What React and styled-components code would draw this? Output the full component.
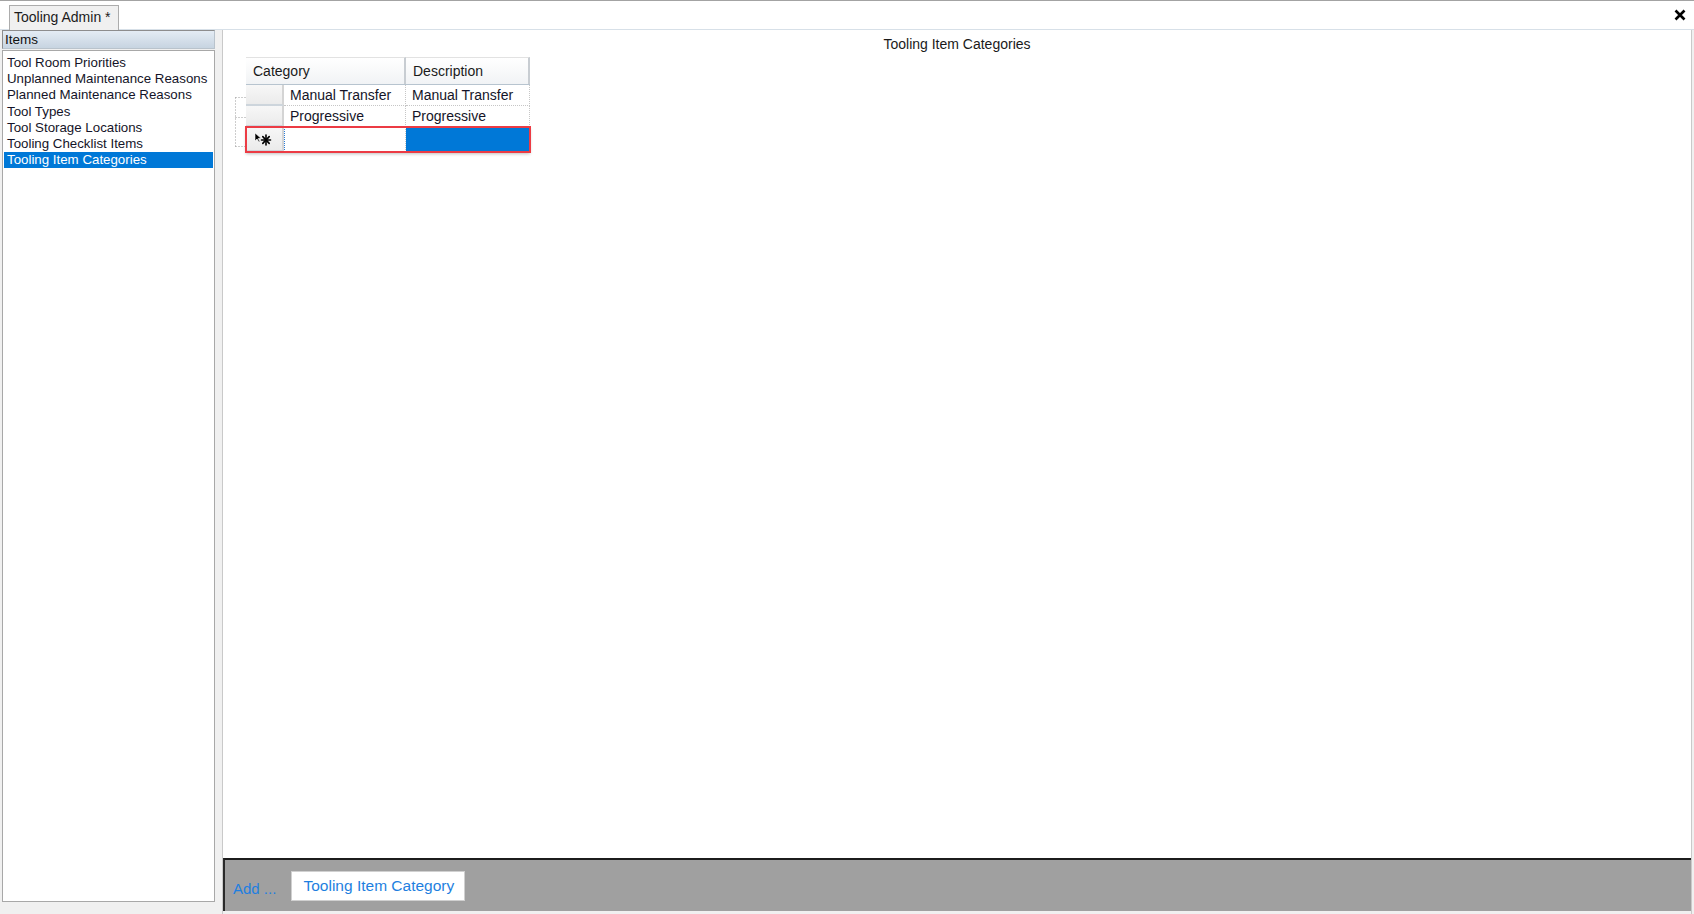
import React from 'react';
import styled, { createGlobalStyle } from 'styled-components';

const GlobalStyle = createGlobalStyle`
  html, body {
    margin: 0;
    padding: 0;
    background: #ffffff;
  }
  body {
    font-family: 'Liberation Sans', Arial, sans-serif;
    font-size: 14px;
    color: #111;
  }
`;

const Window = styled.div`
  width: 1694px;
  height: 914px;
  box-sizing: border-box;
  display: flex;
  flex-direction: column;
  border-top: 1px solid #a3a3a3;
  background: #f0f0f0;
  overflow: hidden;
`;

const TabStrip = styled.div`
  height: 28px;
  flex: none;
  display: flex;
  align-items: flex-end;
  justify-content: space-between;
  background: #ffffff;
  border-bottom: 1px solid #d7e0e8;
  padding: 0 6px 0 9px;
`;

const Tab = styled.div`
  height: 25px;
  box-sizing: border-box;
  padding: 0 7px 3px 4px;
  display: flex;
  align-items: center;
  background: #f0f0f0;
  border: 1px solid #acacac;
  border-bottom: none;
  font-size: 14px;
  color: #1b1b1b;
  margin-bottom: -1px;
`;

const CloseButton = styled.button`
  align-self: center;
  border: 0;
  background: transparent;
  padding: 0;
  width: 16px;
  height: 16px;
  display: flex;
  align-items: center;
  justify-content: center;
  cursor: pointer;
`;

const Body = styled.div`
  flex: 1;
  display: flex;
  min-height: 0;
`;

const LeftPane = styled.div`
  width: 215px;
  flex: none;
  display: flex;
  flex-direction: column;
  padding: 0 0 12px 2px;
  box-sizing: border-box;
`;

const PaneHeader = styled.div`
  height: 19px;
  box-sizing: border-box;
  border: 1px solid #8d8d8d;
  border-right-color: #b9c3cc;
  border-bottom-color: #b9c3cc;
  background: linear-gradient(#e4ecf4, #c7d4e1);
  font-size: 13.5px;
  line-height: 17px;
  padding-left: 2px;
  color: #111;
`;

const ListBox = styled.div`
  flex: 1;
  margin-top: 1px;
  background: #ffffff;
  border: 1px solid #a8a8a8;
  padding: 4px 1px;
  display: flex;
  flex-direction: column;
`;

const ListItem = styled.div`
  font-size: 13.3px;
  line-height: 16.2px;
  height: 16.2px;
  padding-left: 3px;
  white-space: nowrap;
  color: ${(p) => (p.$selected ? '#ffffff' : '#141428')};
  background: ${(p) => (p.$selected ? '#0078d7' : 'transparent')};
`;

const Splitter = styled.div`
  width: 7px;
  flex: none;
`;

const RightPane = styled.div`
  flex: none;
  width: 1468px;
  display: flex;
  flex-direction: column;
  border-left: 1px solid #c9c9c9;
  border-right: 1px solid #c9c9c9;
  padding-bottom: 3px;
`;

const Content = styled.div`
  flex: 1;
  background: #ffffff;
  display: flex;
  flex-direction: column;
`;

const Title = styled.div`
  text-align: center;
  font-size: 14px;
  line-height: 20px;
  margin-top: 4px;
  color: #1a1a1a;
`;

const GridArea = styled.div`
  display: flex;
  align-items: flex-start;
  margin-top: 3px;
  padding-left: 11px;
`;

const TreeLines = styled.svg`
  flex: none;
  margin-top: 39px;
`;

const Grid = styled.div`
  display: flex;
  flex-direction: column;
`;

const HeaderRow = styled.div`
  display: flex;
  height: 27px;
  border-bottom: 1px solid #b7c4cf;
`;

const HeaderCell = styled.div`
  width: ${(p) => p.$w}px;
  box-sizing: border-box;
  padding-left: ${(p) => p.$pad}px;
  display: flex;
  align-items: center;
  font-size: 14px;
  color: #1a1a1a;
  background: linear-gradient(#ffffff, #f1f3f5);
  border-top: 1px solid #e2e2e2;
  border-right: 2px solid #c8cdd2;
`;

const Row = styled.div`
  display: flex;
  height: ${(p) => p.$h}px;
  box-sizing: border-box;
  ${(p) =>
    p.$marked &&
    `
    outline: 2px solid #ec3b44;
    outline-offset: -1px;
    box-shadow: 0 2px 3px rgba(0,0,0,0.25);
  `}
`;

const RowHeader = styled.div`
  width: 38px;
  box-sizing: border-box;
  background: linear-gradient(#f7f7f7, #ebebeb);
  border-right: 2px solid #d4d4d4;
  border-bottom: 2px solid #cdd5dc;
  display: flex;
  align-items: center;
  justify-content: center;
`;

const Cell = styled.div`
  width: ${(p) => p.$w}px;
  box-sizing: border-box;
  padding-left: 6px;
  display: flex;
  align-items: center;
  font-size: 14px;
  color: #141428;
  white-space: nowrap;
  background: ${(p) => (p.$active ? '#0078d7' : '#ffffff')};
  border-right: 1px dotted #c6c6c6;
  border-bottom: 1px dotted #c6c6c6;
  ${(p) => p.$editing && 'border-left: 1px dotted #2b7bd6;'}
`;

const CommandBar = styled.div`
  height: 51px;
  flex: none;
  background: #a0a0a0;
  border-top: 2px solid #1c1c1c;
  border-left: 2px solid #2a2a2a;
  display: flex;
  align-items: center;
  padding-left: 8px;
  gap: 15px;
`;

const AddLabel = styled.span`
  font-size: 15px;
  color: #1e7fe0;
  margin-top: 5px;
`;

const CommandButton = styled.button`
  height: 30px;
  width: 174px;
  border: 1px solid #d0d0d0;
  background: #ffffff;
  color: #1e7fe0;
  font-family: 'Liberation Sans', Arial, sans-serif;
  font-size: 15.5px;
  padding: 0 0 0 1px;
  margin-top: 1px;
  cursor: pointer;
`;

const items = [
  'Tool Room Priorities',
  'Unplanned Maintenance Reasons',
  'Planned Maintenance Reasons',
  'Tool Types',
  'Tool Storage Locations',
  'Tooling Checklist Items',
  'Tooling Item Categories',
];

const rows = [
  { category: 'Manual Transfer', description: 'Manual Transfer' },
  { category: 'Progressive', description: 'Progressive' },
];

const NewRowGlyph = () => (
  <svg width="20" height="14" viewBox="0 0 20 14">
    <path d="M1 1 L1 9 L3 7 L5 10 L6 9.4 L4.2 6.5 L7 6.3 Z" fill="#000" stroke="#fff" strokeWidth="0.6" />
    <g stroke="#000" strokeWidth="1.6" strokeLinecap="round">
      <line x1="12" y1="3" x2="12" y2="13" />
      <line x1="7.5" y1="8" x2="16.5" y2="8" />
      <line x1="8.8" y1="4.6" x2="15.2" y2="11.4" />
      <line x1="15.2" y1="4.6" x2="8.8" y2="11.4" />
    </g>
  </svg>
);

export default function App() {
  return (
    <>
      <GlobalStyle />
      <Window>
        <TabStrip>
          <Tab>Tooling Admin *</Tab>
          <CloseButton aria-label="Close">
            <svg width="12" height="12" viewBox="0 0 12 12">
              <path d="M1.5 1.5 L10.5 10.5 M10.5 1.5 L1.5 10.5" stroke="#000" strokeWidth="2.6" />
            </svg>
          </CloseButton>
        </TabStrip>
        <Body>
          <LeftPane>
            <PaneHeader>Items</PaneHeader>
            <ListBox>
              {items.map((item, i) => (
                <ListItem key={item} $selected={i === items.length - 1}>
                  {item}
                </ListItem>
              ))}
            </ListBox>
          </LeftPane>
          <Splitter />
          <RightPane>
            <Content>
              <Title>Tooling Item Categories</Title>
              <GridArea>
                <TreeLines width="12" height="52" viewBox="0 0 12 52">
                  <g stroke="#9a9a9a" strokeWidth="1" strokeDasharray="1 2" fill="none">
                    <line x1="1.5" y1="1.5" x2="1.5" y2="50.5" />
                    <line x1="1.5" y1="1.5" x2="12" y2="1.5" />
                    <line x1="1.5" y1="21.5" x2="12" y2="21.5" />
                    <line x1="1.5" y1="50.5" x2="12" y2="50.5" />
                  </g>
                </TreeLines>
                <Grid>
                  <HeaderRow>
                    <HeaderCell $w={160} $pad={7}>Category</HeaderCell>
                    <HeaderCell $w={124} $pad={7}>Description</HeaderCell>
                  </HeaderRow>
                  {rows.map((r) => (
                    <Row key={r.category} $h={21}>
                      <RowHeader />
                      <Cell $w={122}>{r.category}</Cell>
                      <Cell $w={124}>{r.description}</Cell>
                    </Row>
                  ))}
                  <Row $h={25} $marked>
                    <RowHeader>
                      <NewRowGlyph />
                    </RowHeader>
                    <Cell $w={122} $editing />
                    <Cell $w={124} $active />
                  </Row>
                </Grid>
              </GridArea>
            </Content>
            <CommandBar>
              <AddLabel>Add ...</AddLabel>
              <CommandButton>Tooling Item Category</CommandButton>
            </CommandBar>
          </RightPane>
        </Body>
      </Window>
    </>
  );
}
